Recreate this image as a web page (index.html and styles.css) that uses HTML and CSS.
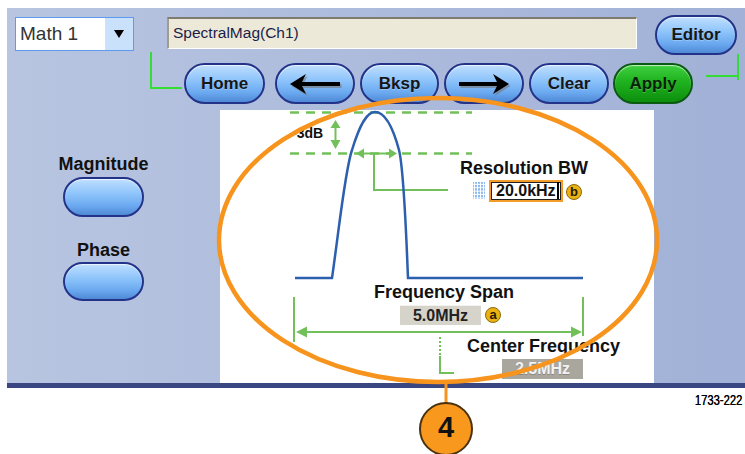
FILE: index.html
```html
<!DOCTYPE html>
<html lang="en">

<head>
    <meta charset="UTF-8">
    <meta name="viewport" content="width=device-width, initial-scale=1.0">
    <title>Spectral Math</title>
    <link rel="stylesheet" href="styles.css">
</head>

<body>
    <div class="screen">
        <div class="panel">
            <div class="toprow">
                <div class="dropdown">
                    <span class="dd-value">Math 1</span>
                    <span class="dd-arrow">
                        <svg width="12" height="10" viewBox="0 0 12 10"><polygon points="1,1 11,1 6,9" fill="#000"/></svg>
                    </span>
                </div>
                <div class="expr">SpectralMag(Ch1)</div>
                <button class="btn editor">Editor</button>
            </div>

            <div class="btnrow">
                <button class="btn home">Home</button>
                <button class="btn arrow-btn left">
                    <svg width="54" height="24" viewBox="0 0 54 24">
                        <path d="M2 12 L18 2 L14 10 H52 V14 H14 L18 22 Z" fill="#777" opacity="0.6" transform="translate(1.5,2)"/>
                        <path d="M2 12 L18 2 L14 10 H52 V14 H14 L18 22 Z" fill="#000"/>
                    </svg>
                </button>
                <button class="btn bksp">Bksp</button>
                <button class="btn arrow-btn right">
                    <svg width="54" height="24" viewBox="0 0 54 24">
                        <path d="M52 12 L36 2 L40 10 H2 V14 H40 L36 22 Z" fill="#777" opacity="0.6" transform="translate(1.5,2)"/>
                        <path d="M52 12 L36 2 L40 10 H2 V14 H40 L36 22 Z" fill="#000"/>
                    </svg>
                </button>
                <button class="btn clear">Clear</button>
                <button class="btn apply">Apply</button>
            </div>

            <div class="main">
                <div class="side">
                    <div class="side-label">Magnitude</div>
                    <button class="btn side-btn"></button>
                    <div class="side-label phase">Phase</div>
                    <button class="btn side-btn low"></button>
                </div>

                <div class="chart">
                    <svg class="plot" width="434" height="273" viewBox="0 0 434 273">
                        <defs>
                            <pattern id="dots" width="3" height="3.4" patternUnits="userSpaceOnUse">
                                <rect width="2" height="2.4" fill="#8cb9f0"/>
                            </pattern>
                        </defs>
                        <g stroke="#72c05a" fill="none">
                            <!-- -3dB reference lines -->
                            <line x1="70" y1="2.5" x2="252" y2="2.5" stroke-width="2.5" stroke-dasharray="9 7"/>
                            <line x1="70" y1="43.5" x2="252" y2="43.5" stroke-width="2.5" stroke-dasharray="9 7"/>
                            <line x1="115.5" y1="14" x2="115.5" y2="34" stroke-width="2"/>
                            <!-- resolution bandwidth -->
                            <line x1="140" y1="43.5" x2="172" y2="43.5" stroke-width="2"/>
                            <polyline points="154,43.5 154,80 228,80" stroke-width="2"/>
                            <!-- span -->
                            <line x1="74" y1="187" x2="74" y2="232" stroke-width="2"/>
                            <line x1="363" y1="187" x2="363" y2="226" stroke-width="2"/>
                            <line x1="84" y1="222" x2="355" y2="222" stroke-width="2"/>
                            <!-- center -->
                            <line x1="220" y1="227" x2="220" y2="246" stroke-width="2" stroke-dasharray="2 2"/>
                            <polyline points="220,246 220,263 234,263" stroke-width="2"/>
                        </g>
                        <g fill="#72c05a">
                            <polygon points="115.5,10 110.5,18 120.5,18"/>
                            <polygon points="115.5,39 110.5,30 120.5,30"/>
                            <polygon points="136,43.5 144,38.5 144,48.5"/>
                            <polygon points="177,43.5 169,38.5 169,48.5"/>
                            <polygon points="76,222 87,216.5 87,227.5"/>
                            <polygon points="362,222 351,216.5 351,227.5"/>
                        </g>
                        <path d="M75 168 H112 C119 120 125 60 132 40 C140 14 147 2 155 2 C164 2 172 14 179 40 C184 60 186 120 188 168 H363" stroke="#2c5fae" stroke-width="2.5" fill="none"/>
                        <rect x="253" y="72" width="12" height="17" fill="url(#dots)"/>
                    </svg>

                    <div class="lbl db">-3dB</div>
                    <div class="lbl rbw">Resolution BW</div>
                    <div class="field rbw-field"><span class="caret">20.0kHz</span></div>
                    <div class="badge badge-b">b</div>
                    <div class="lbl span">Frequency Span</div>
                    <div class="valbox span-box">5.0MHz</div>
                    <div class="badge badge-a">a</div>
                    <div class="lbl center">Center Frequency</div>
                    <div class="valbox center-box">2.5MHz</div>
                </div>
            </div>
        </div>

        <div class="figno"><span>1733-222</span></div>

        <svg class="overlay" width="745" height="454" viewBox="0 0 745 454">
            <g stroke="#33dd33" stroke-width="2" fill="none">
                <polyline points="151,52 151,88 182,88"/>
                <polyline points="706,76 738,76"/>
                <line x1="738" y1="54" x2="738" y2="80"/>
            </g>
            <ellipse cx="438" cy="240" rx="219" ry="142" fill="none" stroke="#f7941d" stroke-width="4.5"/>
            <line x1="446" y1="381" x2="446" y2="404" stroke="#f7941d" stroke-width="3"/>
        </svg>
        <div class="callout">4</div>
    </div>
</body>

</html>
```

FILE: styles.css
```css
body {
    margin: 0;
    padding: 0;
    background: #fff;
    font-family: "Liberation Sans", Arial, sans-serif;
}

.screen {
    position: relative;
    width: 745px;
    height: 454px;
    overflow: hidden;
    background: #fff;
}

.panel {
    margin: 8px 0 0 7px;
    width: 738px;
    height: 375px;
    background: linear-gradient(to right, #b8c5e1, #a1b1d7);
    border-bottom: 5px solid #3a4682;
}

/* top row */
.toprow {
    display: flex;
    align-items: flex-start;
    padding: 9px 0 0 8px;
    height: 38px;
}

.dropdown {
    display: flex;
    width: 119px;
    height: 34px;
    box-sizing: border-box;
    border: 1px solid #5b9cf1;
    background: #fff;
}

.dd-value {
    width: 85px;
    padding-left: 4px;
    font-size: 19px;
    line-height: 32px;
    color: #333;
}

.dd-arrow {
    flex: 1;
    display: flex;
    align-items: center;
    justify-content: center;
    background: #c9e1fa;
}

.expr {
    margin-left: 33px;
    width: 470px;
    height: 32px;
    box-sizing: border-box;
    padding-left: 4px;
    border-top: 2px solid #7f7b70;
    border-left: 2px solid #a09c90;
    border-bottom: 1px solid #fff;
    border-right: 1px solid #fff;
    background: #ece9d9;
    font-size: 15.5px;
    line-height: 28px;
    color: #1c1c4a;
}

.btn {
    box-sizing: border-box;
    padding: 0;
    border: 2px solid #24338a;
    border-radius: 21px;
    background: linear-gradient(to bottom, #bfdeff 0%, #8fc5fb 40%, #6aa8ef 75%, #4f8ad6 100%);
    box-shadow: inset 0 1px 1px rgba(255, 255, 255, 0.7);
    font-family: "Liberation Sans", Arial, sans-serif;
    font-weight: bold;
    font-size: 17px;
    color: #161616;
    text-shadow: 0 1px 0 rgba(255, 255, 255, 0.25);
}

.editor {
    margin-left: 18px;
    margin-top: -2px;
    width: 82px;
    height: 40px;
}

/* command buttons */
.btnrow {
    display: flex;
    margin-top: 8px;
    padding-left: 177px;
    height: 41px;
}

.btnrow .btn {
    height: 41px;
    width: 80px;
}

.btnrow .home { width: 81px; }
.btnrow .left { margin-left: 10px; }
.btnrow .bksp { margin-left: 5px; width: 79px; }
.btnrow .right { margin-left: 5px; }
.btnrow .clear { margin-left: 5px; }
.btnrow .apply {
    margin-left: 4px;
    border-color: #0b5a12;
    background: linear-gradient(to bottom, #3fd03f 0%, #1fb21f 45%, #0d8f0d 100%);
    color: #0a1f0a;
}

.arrow-btn {
    display: flex;
    align-items: center;
    justify-content: center;
}

/* main area */
.main {
    display: flex;
    margin-top: 6px;
    height: 273px;
}

.side {
    width: 213px;
    box-sizing: border-box;
    padding: 45px 76px 0 56px;
    display: flex;
    flex-direction: column;
    align-items: center;
}

.side-label {
    font-weight: bold;
    font-size: 18px;
    line-height: 18px;
    color: #111;
    white-space: nowrap;
}

.side-label.phase {
    margin-top: 24px;
}

.side-btn {
    flex: none;
    margin-top: 4px;
    width: 81px;
    height: 40px;
}

.side-btn.low {
    margin-top: 3px;
    height: 39px;
}

.chart {
    position: relative;
    width: 434px;
    height: 273px;
    background: #fff;
}

.plot {
    display: block;
}

.lbl {
    position: absolute;
    font-weight: bold;
    font-size: 18px;
    line-height: 18px;
    color: #111;
    white-space: nowrap;
}

.lbl.db {
    left: 72px;
    top: 16px;
    font-size: 14px;
    line-height: 14px;
}

.lbl.rbw { left: 240px; top: 49px; }
.lbl.span { left: 154px; top: 173px; }
.lbl.center { left: 247px; top: 227px; }

.field {
    position: absolute;
    left: 269px;
    top: 70px;
    width: 74px;
    height: 22px;
    box-sizing: border-box;
    border: 2px solid #f39c2a;
    box-shadow: inset 0 0 0 1px #222;
    background: #fff;
    padding-left: 5px;
    font-weight: bold;
    font-size: 16px;
    line-height: 18px;
    color: #111;
}

.caret {
    padding-right: 1px;
    border-right: 2px solid #000;
}

.badge {
    position: absolute;
    width: 16px;
    height: 16px;
    box-sizing: border-box;
    border: 1px solid #8a6a08;
    border-radius: 50%;
    background: #e9b212;
    font-weight: bold;
    font-size: 13px;
    line-height: 13px;
    text-align: center;
    color: #2a1a00;
}

.badge-b { left: 346px; top: 74px; }
.badge-a { left: 265px; top: 197px; }

.valbox {
    position: absolute;
    width: 81px;
    height: 19px;
    font-weight: bold;
    font-size: 16px;
    line-height: 20px;
    text-align: center;
}

.span-box {
    left: 180px;
    top: 195px;
    background: #d6d3cb;
    border-top: 1px solid #f4f2ee;
    color: #222;
}

.center-box {
    left: 282px;
    top: 249px;
    height: 20px;
    background: #a9a69e;
    color: #f2f2f2;
    text-shadow: 0 1px 0 #8a877f;
}

/* figure number */
.figno {
    margin-top: 5px;
    padding-right: 3px;
    text-align: right;
    font-size: 14px;
    line-height: 14px;
    color: #000;
}

.figno span {
    display: inline-block;
    transform: scaleX(0.8);
    transform-origin: right center;
    text-shadow: 0.3px 0 0 #000;
}

/* callout overlay */
.overlay {
    position: absolute;
    left: 0;
    top: 0;
    pointer-events: none;
}

.callout {
    position: absolute;
    left: 419px;
    top: 402px;
    width: 54px;
    height: 54px;
    box-sizing: border-box;
    border: 2px solid #4a3210;
    border-radius: 50%;
    background: #f8981d;
    font-weight: bold;
    font-size: 29px;
    line-height: 46px;
    text-align: center;
    color: #111;
}
```
